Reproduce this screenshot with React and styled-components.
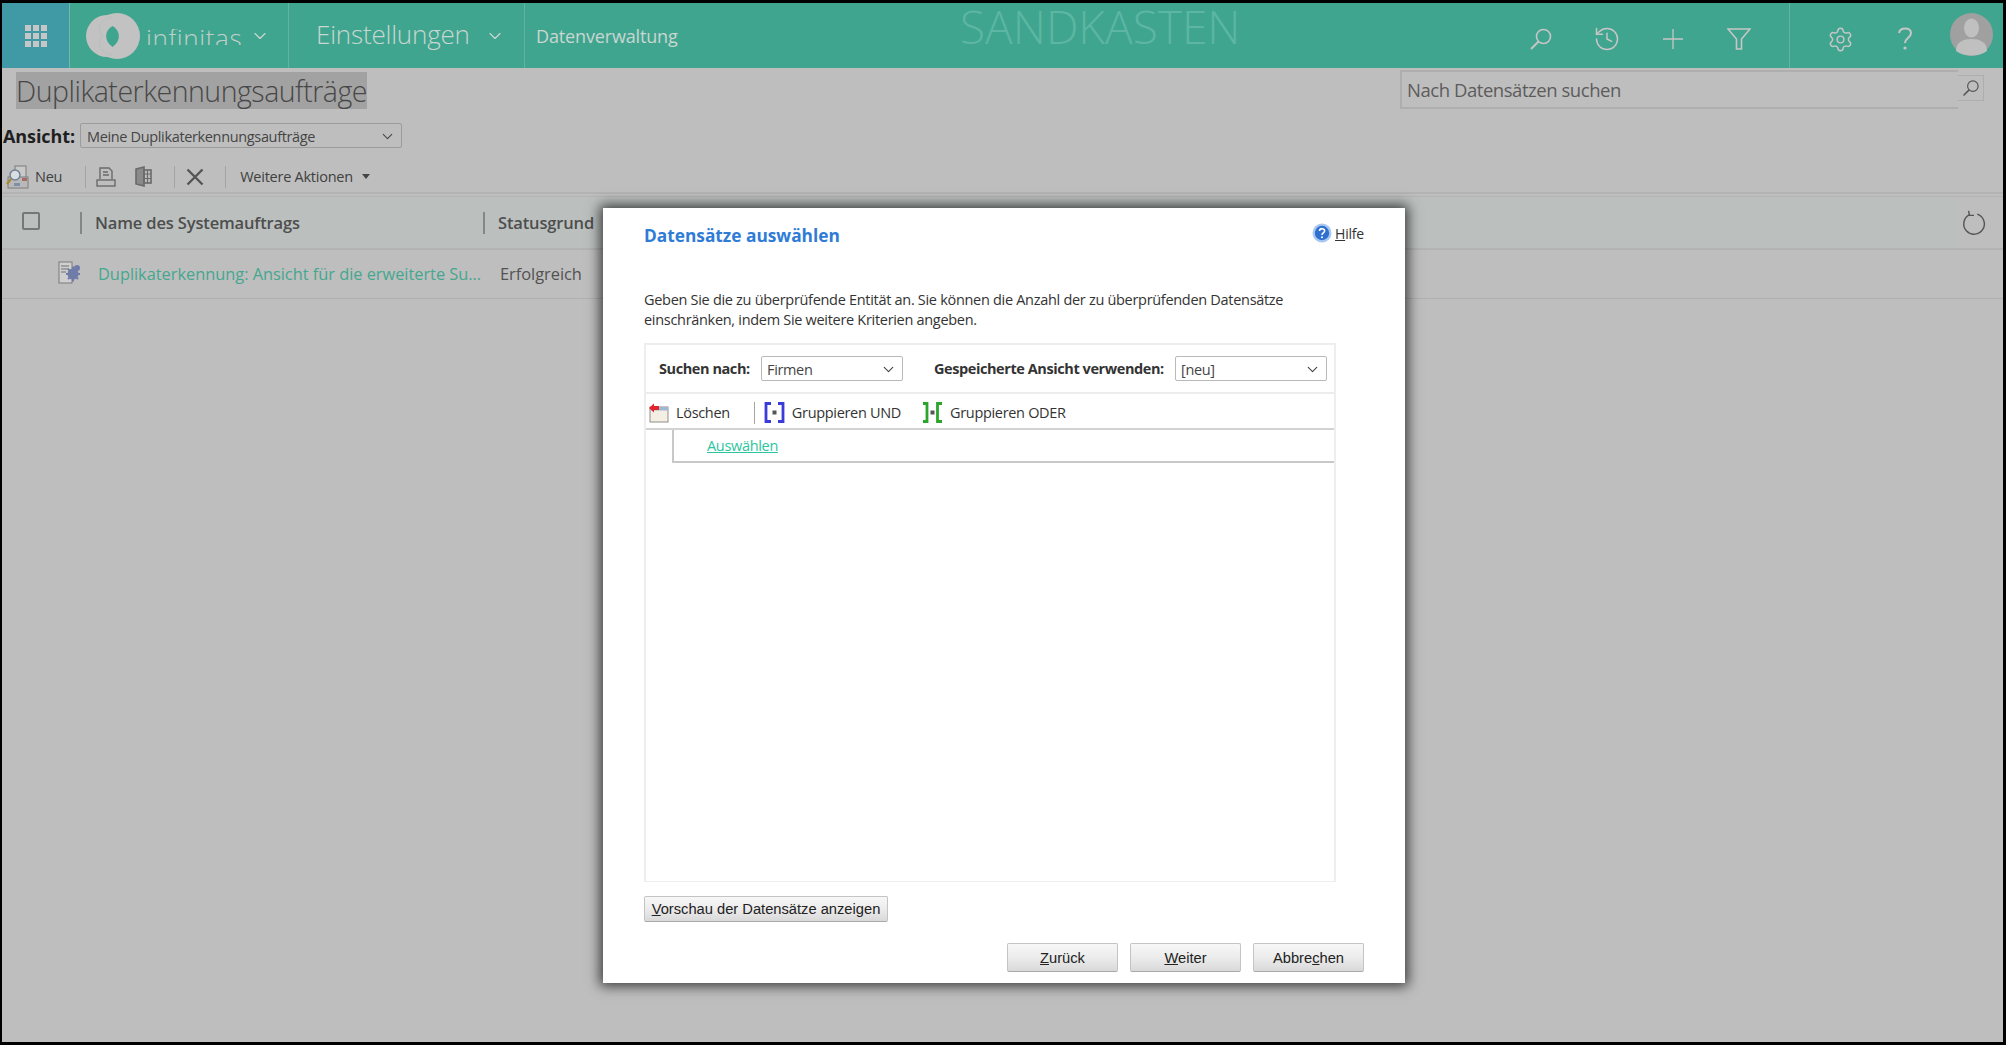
import React from 'react';
import styled, { createGlobalStyle } from 'styled-components';
import { ChevronDown, History, Settings } from 'lucide-react';

const GlobalStyle = createGlobalStyle`
  html, body {
    margin: 0;
    padding: 0;
  }
  body {
    font-family: 'Open Sans', 'Noto Sans', sans-serif;
    background: #000;
  }
  * {
    box-sizing: border-box;
  }
`

const Frame = styled.div`
  position: relative;
  width: 2006px;
  height: 1045px;
  border: solid #000;
  border-width: 3px 3px 3px 2px;
  background: #bebebe;
  overflow: hidden;
`

const TopBar = styled.div`
  display: flex;
  height: 65px;
  background: #40a58f;
  color: #c9d6d1;
`

const Waffle = styled.div`
  width: 68px;
  display: flex;
  align-items: center;
  justify-content: center;
  background: #3f9aa5;
  border-right: 1px solid #74b8ac;
`

const BarSection = styled.div`
  width: ${props => props.width}px;
  display: flex;
  align-items: center;
  border-right: 1px solid #63b3a1;
  padding-left: ${props => props.pad || 0}px;
`

const LogoText = styled.div`
  width: 104px;
  height: 16px;
  margin: 3px 0 0 6px;
  overflow: hidden;
  font-size: 26px;
  font-weight: 300;
  line-height: 18px;
  letter-spacing: 0.6px;
  color: #c0cfca;
`

const AppName = styled.div`
  font-size: 26px;
  font-weight: 300;
  letter-spacing: -0.2px;
  margin-top: -4px;
  width: 169px;
  white-space: nowrap;
`

const AreaName = styled.div`
  display: flex;
  align-items: center;
  width: 161px;
  padding-left: 11px;
  font-size: 18px;
  letter-spacing: -0.15px;
  white-space: nowrap;
`

const Sandbox = styled.div`
  width: 290px;
  margin-left: 274px;
  font-size: 46px;
  font-weight: 300;
  line-height: 46px;
  color: #5cb6a3;
  white-space: nowrap;
`

const BarIcons = styled.div`
  display: flex;
  align-items: center;
  margin-left: 260px;
  width: 280px;
  height: 100%;
  border-right: 1px solid #63b3a1;
  padding: 6px 0 0 19px;
  gap: 42px;
  color: #c6c6c6;
`

const IconSlot = styled.span`
  display: flex;
  justify-content: center;
  width: 24px;
  flex: none;
  svg {
    flex: none;
  }
`

const BarIcons2 = styled.div`
  display: flex;
  align-items: center;
  padding: 7px 0 0 37px;
  gap: 43px;
`

const Avatar = styled.div`
  position: absolute;
  right: 10px;
  top: 10px;
`

const TitleRow = styled.div`
  display: flex;
  justify-content: space-between;
  height: 44px;
  padding: 2px 19px 0 14px;
`

const Title = styled.h1`
  margin: 2px 0 0;
  height: 37px;
  width: 351px;
  background: #a2a2a2;
  color: #474747;
  font-size: 28.5px;
  font-weight: 300;
  letter-spacing: -0.48px;
  line-height: 38px;
  white-space: nowrap;
`

const SearchBox = styled.div`
  display: flex;
  width: 584px;
  height: 39px;
`

const SearchField = styled.div`
  width: 558px;
  border: 2px solid #aeaeae;
  border-right: none;
  padding-left: 5px;
  font-size: 18.5px;
  letter-spacing: -0.45px;
  line-height: 36px;
  color: #5c5c5c;
`

const SearchButton = styled.div`
  display: flex;
  align-items: center;
  justify-content: center;
  width: 26px;
  flex: none;
  height: 26px;
  margin-top: 5px;
  border: 1px solid #aeaeae;
  border-left: none;
  color: #555;
`

const ViewRow = styled.div`
  display: flex;
  align-items: center;
  height: 25px;
  margin-top: 11px;
  padding-left: 1px;
`

const ViewLabel = styled.div`
  width: 77px;
  font-size: 18px;
  font-weight: 700;
  letter-spacing: -0.1px;
  color: #1f1f1f;
`

const Select = styled.div`
  display: flex;
  align-items: center;
  justify-content: space-between;
  width: ${props => props.width}px;
  height: 25px;
  padding: 1px 5px 0 ${props => props.dim ? 6 : 5}px;
  border: 1px solid ${props => props.dim ? '#9c9c9c' : '#b9b9b9'};
  border-radius: 2px;
  font-size: 14.5px;
  font-weight: 400;
  letter-spacing: -0.35px;
  color: ${props => props.dim ? '#454545' : '#444'};
  white-space: nowrap;
`

const Toolbar = styled.div`
  display: flex;
  align-items: center;
  height: 30px;
  margin-top: 12px;
  padding: 3px 0 0 4px;
  font-size: 14.5px;
  letter-spacing: -0.25px;
  color: #404040;
`

const ToolLabel = styled.span`
  margin-left: 6px;
`

const ToolGap = styled.span`
  width: 19px;
  flex: none;
`

const Sep = styled.span`
  width: 1px;
  height: 22px;
  flex: none;
  background: #a4a4a4;
  margin: ${props => props.margin};
`

const Caret = styled.span`
  width: 0;
  height: 0;
  margin-left: 9px;
  border: 4px solid transparent;
  border-top: 5px solid #454545;
  border-bottom: none;
`

const Rule = styled.div`
  height: 2px;
  margin-top: 2px;
  background: #b3b3b3;
`

const HeaderRow = styled.div`
  display: flex;
  align-items: center;
  height: 54px;
  margin-top: 2px;
  padding-left: 20px;
  background: linear-gradient(to right, #bbc0bf 1954px, #bebebe 1954px);
  border-top: 1px solid #b3b3b3;
  border-bottom: 2px solid #b3b3b3;
  font-size: 16.5px;
  font-weight: 600;
  letter-spacing: -0.15px;
  color: #4e4e4e;
  position: relative;
`

const Check = styled.span`
  width: 18px;
  height: 18px;
  flex: none;
  margin-top: -4px;
  border: 2px solid #777;
  border-radius: 2px;
`

const ColHead = styled.div`
  display: flex;
  align-items: center;
  width: ${props => props.width}px;
  margin-left: ${props => props.left || 0}px;
  white-space: nowrap;
  &::before {
    content: '';
    width: 2px;
    height: 22px;
    background: #868686;
    margin-right: 13px;
  }
`

const Refresh = styled.span`
  position: absolute;
  right: 16px;
  top: 13px;
  color: #555;
`

const DataRow = styled.div`
  display: flex;
  align-items: center;
  height: 49px;
  padding: 0 0 2px 56px;
  border-bottom: 1px solid #b0b0b0;
  font-size: 16.4px;
  letter-spacing: -0.03px;
  color: #525252;
  white-space: nowrap;
`

const RowLink = styled.a`
  width: 418px;
  padding-left: 16px;
  color: #45a78f;
`

const Dialog = styled.div`
  position: absolute;
  left: 601px;
  top: 205px;
  width: 802px;
  height: 775px;
  padding: 0 41px;
  background: #fff;
  box-shadow: 0 0 12px 3px rgba(0, 0, 0, 0.7);
  color: #333;
`

const DialogHead = styled.div`
  display: flex;
  align-items: center;
  justify-content: space-between;
  height: 56px;
`

const DialogTitle = styled.h2`
  margin: -2px 0 0;
  font-size: 17.3px;
  font-weight: 700;
  color: #2e7cd6;
`

const Help = styled.div`
  display: flex;
  align-items: center;
  gap: 3px;
  margin-top: -6px;
  font-size: 14px;
  letter-spacing: -0.2px;
`

const Intro = styled.p`
  margin: 26px 0 13px;
  font-size: 14.5px;
  letter-spacing: -0.3px;
  line-height: 20px;
`

const Builder = styled.div`
  width: 692px;
  height: 539px;
  border: 2px solid #eee;
  border-bottom-width: 1px;
  font-size: 14.5px;
  letter-spacing: -0.32px;
`

const FieldRow = styled.div`
  display: flex;
  align-items: center;
  height: 49px;
  padding-left: 13px;
  border-bottom: 2px solid #ececec;
  font-weight: 700;
  letter-spacing: -0.42px;
`

const FieldLabel = styled.label`
  width: ${props => props.width}px;
  margin-left: ${props => props.left || 0}px;
  flex: none;
  white-space: nowrap;
`

const BuilderTools = styled.div`
  display: flex;
  align-items: center;
  height: 36px;
  padding: 3px 0 0 2px;
  border-bottom: 2px solid #d2d2d2;
  white-space: nowrap;
`

const Tool = styled.span`
  display: flex;
  align-items: center;
  gap: 7px;
  margin-left: ${props => props.left || 0}px;
`

const Clause = styled.div`
  height: 33px;
  margin-left: 26px;
  padding-left: 33px;
  border-left: 2px solid #c8c8c8;
  border-bottom: 2px solid #c8c8c8;
  line-height: 31px;
  a {
    color: #2cc5a0;
    text-decoration: underline;
  }
`

const LegacyButton = styled.button`
  width: ${props => props.width}px;
  height: ${props => props.height}px;
  padding: 0;
  border: 1px solid #c4c4c4;
  border-bottom-color: #a9a9a9;
  border-radius: 2px;
  background: linear-gradient(to bottom, #f7f7f7 0%, #ececec 50%, #d9d9d9 100%);
  font-family: 'Liberation Sans', Arial, sans-serif;
  font-size: 14.7px;
  color: #222;
`

const PreviewWrap = styled.div`
  margin-top: 14px;
`

const DialogFoot = styled.div`
  display: flex;
  justify-content: flex-end;
  gap: 12px;
  margin-top: 21px;
`

const Line = ({ size = 24, children, ...rest }) => (
  <svg width={size} height={size} viewBox="0 0 24 24" fill="none" stroke="currentColor" strokeWidth="1.6" {...rest}>
    {children}
  </svg>
);

const WaffleIcon = () => (
  <svg width="22" height="22" viewBox="0 0 22 22" fill="#c6c6c6">
    {[0, 8, 16].map(y => [0, 8, 16].map(x => <rect key={`${x}-${y}`} x={x} y={y} width="6" height="6" />))}
  </svg>
);

const LogoMark = () => (
  <svg width="54" height="46" viewBox="0 0 54 46">
    <circle cx="21" cy="23" r="21" fill="#c2c2c2" />
    <circle cx="31" cy="23" r="23" fill="#c2c2c2" />
    <path d="M16 23 C10 16 14 6 26 4 M16 23 C10 30 14 40 26 42" fill="none" stroke="#b5bfbb" strokeWidth="1" />
    <path d="M26.5 13 C18 18 18 28 26.5 34 C35 28 35 18 26.5 13Z" fill="#40a58f" />
  </svg>
);

const SearchIcon = ({ size = 24 }) => (
  <Line size={size}>
    <circle cx="14.5" cy="9.5" r="7" />
    <path d="M9.5 14.5 L2 22" strokeWidth="2" />
  </Line>
);

const PlusIcon = () => (
  <Line strokeWidth="1.3">
    <path d="M12 2 V22 M2 12 H22" />
  </Line>
);

const FilterIcon = () => (
  <svg width="24" height="22" viewBox="0 0 24 22" fill="none" stroke="#c6c6c6" strokeWidth="1.6">
    <path d="M1 1 H23 L14.5 11 V21 H9.5 V11 Z" />
  </svg>
);

const HelpMark = () => (
  <svg width="16" height="24" viewBox="0 0 16 24" fill="none" stroke="#c6c6c6" strokeWidth="2">
    <path d="M2 6 C3 0 14 0 14 6 C14 11 8 11 8 16" />
    <circle cx="8" cy="21" r="1.6" fill="#c6c6c6" stroke="none" />
  </svg>
);

const AvatarIcon = () => (
  <svg width="43" height="43" viewBox="0 0 43 43">
    <circle cx="21.5" cy="21.5" r="21.5" fill="#a0a0a0" />
    <ellipse cx="21.5" cy="15" rx="7.5" ry="9.5" fill="#c0c0c0" />
    <path d="M6 38 C6 29 13 26 21.5 26 C30 26 37 29 37 38 C29 44 14 44 6 38Z" fill="#c0c0c0" />
  </svg>
);

const NewIcon = () => (
  <svg width="23" height="24" viewBox="0 0 23 24">
    <rect x="9" y="1" width="11" height="15" fill="#c9c9c9" stroke="#7d7d7d" />
    <rect x="2" y="12" width="20" height="11" fill="#b9b9b9" stroke="#7d7d7d" />
    <circle cx="9" cy="10" r="5" fill="#d8dde2" stroke="#6f7f90" strokeWidth="1.4" />
    <path d="M5 14 L1 19" stroke="#a68a3a" strokeWidth="2.4" />
    <rect x="16" y="13" width="5" height="3" fill="#a66a6a" />
    <rect x="8" y="18" width="6" height="3" fill="#7f8fa8" />
  </svg>
);

const PrinterIcon = () => (
  <svg width="20" height="20" viewBox="0 0 20 20" fill="none" stroke="#6a6a6a" strokeWidth="1.4">
    <path d="M4 12 V1 H13 L16 4 V12" />
    <path d="M7 5 H12 M7 8 H13" />
    <rect x="1" y="13" width="18" height="6" />
  </svg>
);

const ExcelIcon = () => (
  <svg width="17" height="21" viewBox="0 0 17 21" fill="none" stroke="#6a6a6a" strokeWidth="1.6">
    <path d="M1 3 L9 1 V20 L1 18 Z" fill="#8a8a8a" />
    <rect x="9" y="4" width="7" height="13" />
    <path d="M9 8 H16 M9 12.5 H16 M12.5 4 V17" strokeWidth="1.2" />
  </svg>
);

const DeleteIcon = () => (
  <svg width="18" height="18" viewBox="0 0 18 18" fill="none" stroke="#555" strokeWidth="2.4">
    <path d="M1.5 1.5 L16.5 16.5 M16.5 1.5 L1.5 16.5" />
  </svg>
);

const RefreshIcon = () => (
  <Line size={26} strokeWidth="1.3">
    <path d="M15 3.8 A9.5 9.5 0 1 1 7.5 4.5" />
    <path d="M7 0.8 L7.8 4.8 L12 5" />
  </Line>
);

const JobIcon = () => (
  <svg width="24" height="24" viewBox="0 0 24 24">
    <rect x="1" y="1" width="13" height="21" fill="#cfcfcf" stroke="#7a7a7a" />
    <path d="M3 5 H11 M3 8 H11 M3 11 H8" stroke="#707070" strokeWidth="1.2" />
    <circle cx="15" cy="13" r="5.5" fill="#6f7ca8" />
    <circle cx="19" cy="7" r="3" fill="#6f7ca8" />
    <circle cx="15" cy="13" r="2" fill="#c9cfdf" />
    <path d="M15 5.5 V20.5 M8 13 H22 M10 8 L20 18 M20 8 L10 18" stroke="#6f7ca8" strokeWidth="2" />
  </svg>
);

const HelpIcon = () => (
  <svg width="20" height="20" viewBox="0 0 20 20">
    <circle cx="10" cy="10" r="9.5" fill="#a8c8f0" />
    <circle cx="10" cy="10" r="7.2" fill="#2f6fcf" />
    <path d="M7.4 8 C7.8 4.8 12.8 5 12.6 8 C12.4 10 10 10 10 12" fill="none" stroke="#fff" strokeWidth="1.6" />
    <circle cx="10" cy="14.2" r="1" fill="#fff" />
  </svg>
);

const ClearIcon = () => (
  <svg width="21" height="20" viewBox="0 0 21 20">
    <rect x="2" y="4" width="18" height="15" fill="#f4efe2" stroke="#8d8d8d" />
    <rect x="2" y="4" width="18" height="3.5" fill="#9fb7d2" />
    <path d="M1 5 L6 0.5 V3 H11 V7 H6 V9.5 Z" fill="#e5232a" />
  </svg>
);

const GroupAndIcon = () => (
  <svg width="21" height="21" viewBox="0 0 21 21" fill="none" stroke="#3b3bd8" strokeWidth="2.8">
    <path d="M7 1.5 H2 V19.5 H7 M14 1.5 H19 V19.5 H14" />
    <rect x="8.5" y="8.5" width="4" height="4" fill="#555" stroke="none" />
  </svg>
);

const GroupOrIcon = () => (
  <svg width="21" height="21" viewBox="0 0 21 21" fill="none" stroke="#2ba52b" strokeWidth="2.8">
    <path d="M1 1.5 H5 V19.5 H1 M20 1.5 H15.5 V19.5 H20" />
    <rect x="8.5" y="8.5" width="4" height="4" fill="#555" stroke="none" />
  </svg>
);

const App = () => (
  <Frame>
    <GlobalStyle />
    <TopBar>
      <Waffle><WaffleIcon /></Waffle>
      <BarSection width={219} pad={16}>
        <LogoMark />
        <LogoText>infinitas</LogoText>
        <ChevronDown size={20} strokeWidth={1.4} />
      </BarSection>
      <BarSection width={236} pad={27}>
        <AppName>Einstellungen</AppName>
        <ChevronDown size={20} strokeWidth={1.4} />
      </BarSection>
      <AreaName>Datenverwaltung</AreaName>
      <Sandbox>SANDKASTEN</Sandbox>
      <BarIcons>
        <SearchIcon />
        <IconSlot><History size={28} strokeWidth={1.3} /></IconSlot>
        <PlusIcon />
        <FilterIcon />
      </BarIcons>
      <BarIcons2>
        <Settings size={27} strokeWidth={1.3} color="#c6c6c6" />
        <HelpMark />
      </BarIcons2>
      <Avatar><AvatarIcon /></Avatar>
    </TopBar>

    <TitleRow>
      <Title>Duplikaterkennungsaufträge</Title>
      <SearchBox>
        <SearchField>Nach Datensätzen suchen</SearchField>
        <SearchButton><SearchIcon size={18} /></SearchButton>
      </SearchBox>
    </TitleRow>

    <ViewRow>
      <ViewLabel>Ansicht:</ViewLabel>
      <Select width={322} dim>
        Meine Duplikaterkennungsaufträge
        <ChevronDown size={17} strokeWidth={1.5} />
      </Select>
    </ViewRow>

    <Toolbar>
      <NewIcon />
      <ToolLabel>Neu</ToolLabel>
      <Sep margin="0 10px 0 23px" />
      <PrinterIcon />
      <ToolGap />
      <ExcelIcon />
      <Sep margin="0 11px 0 22px" />
      <DeleteIcon />
      <Sep margin="0 14px 0 21px" />
      Weitere Aktionen
      <Caret />
    </Toolbar>
    <Rule />

    <HeaderRow>
      <Check />
      <ColHead left={40} width={403}>Name des Systemauftrags</ColHead>
      <ColHead>Statusgrund</ColHead>
      <Refresh><RefreshIcon /></Refresh>
    </HeaderRow>
    <DataRow>
      <JobIcon />
      <RowLink>Duplikaterkennung: Ansicht für die erweiterte Su...</RowLink>
      Erfolgreich
    </DataRow>

    <Dialog>
      <DialogHead>
        <DialogTitle>Datensätze auswählen</DialogTitle>
        <Help><HelpIcon /><span><u>H</u>ilfe</span></Help>
      </DialogHead>
      <Intro>
        Geben Sie die zu überprüfende Entität an. Sie können die Anzahl der zu überprüfenden Datensätze<br />
        einschränken, indem Sie weitere Kriterien angeben.
      </Intro>
      <Builder>
        <FieldRow>
          <FieldLabel width={102}>Suchen nach:</FieldLabel>
          <Select width={142}>Firmen<ChevronDown size={17} strokeWidth={1.6} /></Select>
          <FieldLabel width={241} left={31}>Gespeicherte Ansicht verwenden:</FieldLabel>
          <Select width={152}>[neu]<ChevronDown size={17} strokeWidth={1.6} /></Select>
        </FieldRow>
        <BuilderTools>
          <Tool><ClearIcon />Löschen</Tool>
          <Sep margin="0 9px 0 24px" />
          <Tool><GroupAndIcon />Gruppieren UND</Tool>
          <Tool left={21}><GroupOrIcon />Gruppieren ODER</Tool>
        </BuilderTools>
        <Clause><a>Auswählen</a></Clause>
      </Builder>
      <PreviewWrap>
        <LegacyButton width={244} height={26}><u>V</u>orschau der Datensätze anzeigen</LegacyButton>
      </PreviewWrap>
      <DialogFoot>
        <LegacyButton width={111} height={29}><u>Z</u>urück</LegacyButton>
        <LegacyButton width={111} height={29}><u>W</u>eiter</LegacyButton>
        <LegacyButton width={111} height={29}>Abbre<u>c</u>hen</LegacyButton>
      </DialogFoot>
    </Dialog>
  </Frame>
);

export default App;
